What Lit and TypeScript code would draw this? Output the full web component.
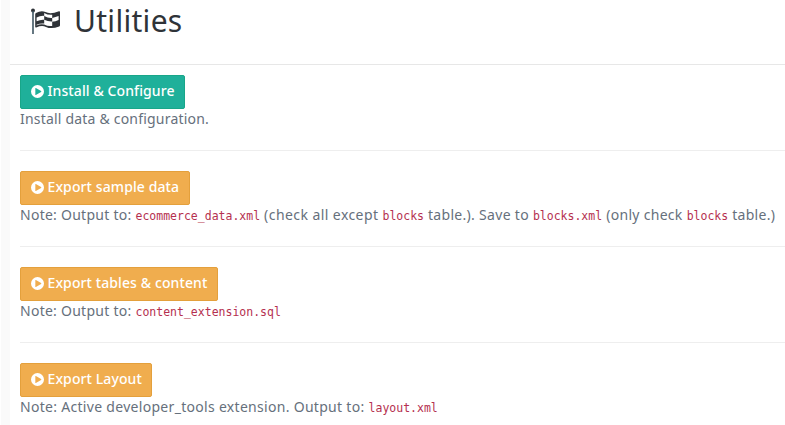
import { LitElement, html, css, svg } from "lit";
import { customElement } from "lit/decorators.js";

const play = html`<svg class="play" viewBox="0 0 12 12">${svg`<path fill="currentColor" fill-rule="evenodd" d="M6 0a6 6 0 1 1 0 12a6 6 0 1 1 0-12zM4 3.100v5.800q0 .5.5.3L9.300 6.400q.5-.4 0-.8L4.500 2.800Q4 2.600 4 3.100z"/>`}</svg>`;

const flag = html`<svg class="flag" viewBox="0 0 30 27">${svg`
  <circle cx="2" cy="2.400" r="2" fill="#2f3338"/>
  <path d="M1.200 3h1.600v23h-1.600z" fill="#3f5662"/>
  <path fill="#2f3338" d="M4.200 6.200Q4.200 5.500 5 5.100Q10 2.200 14.500 4.100Q19.500 6.600 28 3.200Q29 2.900 29 4V17.200Q29 18 28.200 18.400Q20.500 21.500 15 18.900Q11 16.700 5.200 19.400Q4.200 19.700 4.200 18.700z"/>
  <path fill="#fff" d="M5.600 9.600Q9.500 7.500 13.200 7.900V11.800Q9.500 11.400 5.600 13.300z
  M13.200 4.900Q17 7.200 21.200 6.700V9.900Q17 10.200 13.200 8z
  M13.200 11.800Q17 13.800 21.200 13.600V17.900Q17 18.500 13.200 16.500z
  M21.200 9.900Q24.500 9.300 27.600 8V11.900Q24.500 13.300 21.200 13.700z
  M5.600 16.800Q9.500 15 13.200 15.600V16.600Q9.500 15.600 5.600 17.500z"/>`}</svg>`;

@customElement("app-root")
export class AppRoot extends LitElement {
  static styles = css`
    :host { display: flex; height: 425px; overflow: hidden; background: #fff; color: #676a6c;
      font: 14px/20px "Noto Sans", sans-serif; white-space: nowrap; }
    * { box-sizing: border-box; }
    .gutter { flex: 0 0 10px; border-left: 1px solid #fff; background: #fafafa; }
    main { flex: 1; min-width: 0; }
    header { display: flex; height: 65px; border-bottom: 1px solid #e7e7e7; padding: 8px 0 0 21px; color: #2f3338; }
    .flag { width: 30px; height: 27px; flex: none; }
    h1 { margin: -8px 0 0 13px; font-size: 30px; line-height: 42px; font-weight: 400; letter-spacing: 0.300px; }
    section { height: 96px; margin-left: 10px; padding-top: 20px; border-top: 1px solid #eee; }
    section.first { height: 85px; padding-top: 10px; border: 0; }
    button { display: flex; align-items: center; width: 165px; height: 34px; padding: 0 0 2px 9.500px; border: 1px solid #18a689; border-radius: 2px;
      background: #1fb09a; color: #fff; font: 500 14px/20px "Noto Sans", sans-serif; letter-spacing: 0.100px; }
    button.warn { background: #f0ad4e; border-color: #e4a03c; }
    .sample { width: 170px; } .tables { width: 198px; } .layout { width: 132px; }
    .play { width: 13px; height: 13px; margin: 0 4px 0 0; flex: none; }
    p { display: flex; margin: 0; height: 20px; color: #66707c; letter-spacing: 0.300px; }
    .snug { letter-spacing: 0.200px; }
    .lead { letter-spacing: 0.260px; }
    .wide { letter-spacing: 0.430px; }
    code { font: 11.500px/23px "DejaVu Sans Mono", monospace; letter-spacing: 0; color: #b5304f; margin: 0 4px; }
  `;
  render() {
    return html`
      <div class="gutter"></div>
      <main>
        <header>${flag}<h1>Utilities</h1></header>
        <section class="first"><button>${play}<span>Install &amp; Configure</span></button><p><span class="snug">Install data &amp; configuration.</span></p></section>
        <section><button class="warn sample">${play}<span>Export sample data</span></button>
          <p><span class="lead">Note: Output to:</span><code>ecommerce_data.xml</code><span class="wide">(check all except</span><code>blocks</code><span>table.). Save to</span><code>blocks.xml</code><span>(only check</span><code>blocks</code><span>table.)</span></p></section>
        <section><button class="warn tables">${play}<span>Export tables &amp; content</span></button><p><span class="lead">Note: Output to:</span><code>content_extension.sql</code></p></section>
        <section><button class="warn layout">${play}<span>Export Layout</span></button><p><span>Note: Active developer_tools extension. Output to:</span><code>layout.xml</code></p></section>
      </main>`;
  }
}
